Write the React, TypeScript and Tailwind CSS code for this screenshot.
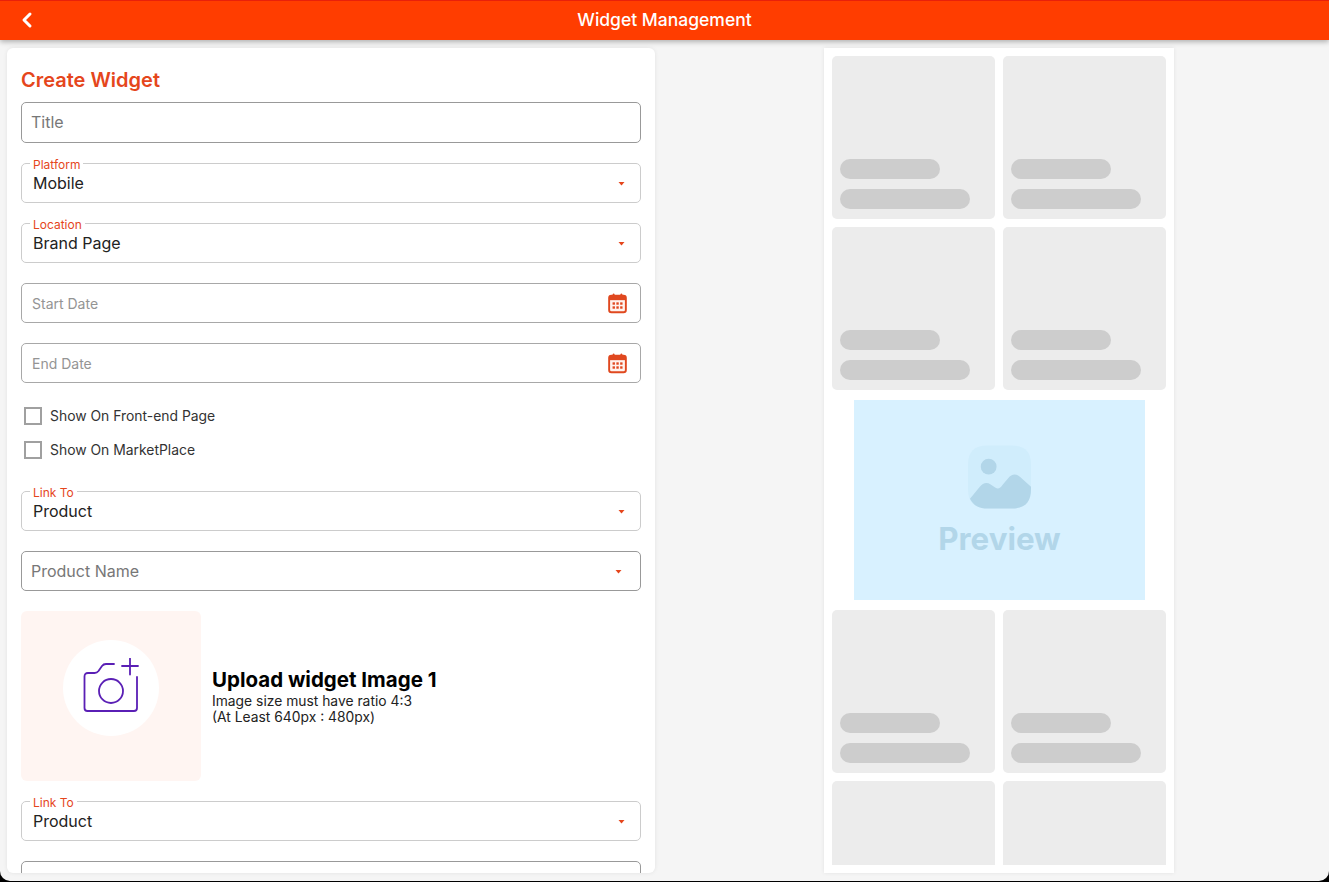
import { ChevronLeft } from "lucide-react";

function Caret({ className = "" }: { className?: string }) {
  return (
    <svg width="7" height="5" viewBox="0 0 7 5" className={className}>
      <path d="M0.5 1h6L3.5 4.4z" fill="#e5461c" />
    </svg>
  );
}

function CalendarIcon() {
  return (
    <svg width="19" height="22" viewBox="0 0 20 22" fill="none">
      <rect x="1.2" y="3.2" width="17.6" height="17.6" rx="2.4" stroke="#e0481f" strokeWidth="2" fill="#fff3ee" />
      <path d="M1.5 3.5h17v4.500h-17z" fill="#e0481f" />
      <rect x="5" y="1" width="1.8" height="4" rx="0.9" fill="#e0481f" />
      <rect x="13.2" y="1" width="1.8" height="4" rx="0.9" fill="#e0481f" />
      <g fill="#e0481f">
        <rect x="4.800" y="10.300" width="2.500" height="2.500" />
        <rect x="8.800" y="10.300" width="2.500" height="2.500" />
        <rect x="12.800" y="10.300" width="2.500" height="2.500" />
        <rect x="4.800" y="14.500" width="2.500" height="2.500" />
        <rect x="8.800" y="14.500" width="2.500" height="2.500" />
        <rect x="12.800" y="14.500" width="2.500" height="2.500" />
      </g>
    </svg>
  );
}

function SelectField({ label, value }: { label: string; value: string }) {
  return (
    <div className="relative h-10 rounded-[5px] border border-[#cccccc] flex items-center justify-between pl-[11px] pr-[15px]">
      <span className="absolute -top-[6px] left-2 bg-white px-[3px] text-xs leading-[14px] text-[#e5461c]">{label}</span>
      <span className="text-base leading-5 text-[#222]">{value}</span>
      <Caret />
    </div>
  );
}

function DateField({ label }: { label: string }) {
  return (
    <div className="h-10 rounded-[5px] border border-[#a8a8a8] flex items-center justify-between pl-2.5 pr-[13px]">
      <span className="text-sm text-[#949494] pt-0.5">{label}</span>
      <CalendarIcon />
    </div>
  );
}

function CheckRow({ label }: { label: string }) {
  return (
    <div className="flex items-center h-[18px] pl-[3px]">
      <span className="w-[18px] h-[18px] border-2 border-[#a0a0a0]" />
      <span className="ml-2 text-[13.9px] text-[#333]">{label}</span>
    </div>
  );
}

function SkeletonTile() {
  return (
    <div className="h-[163px] rounded-[5px] bg-[#ececec] flex flex-col justify-end gap-2.5 pl-2 pb-2.5">
      <div className="w-[100px] h-5 rounded-full bg-[#cdcdcd]" />
      <div className="w-[130px] h-5 rounded-full bg-[#cdcdcd]" />
    </div>
  );
}

export default function App() {
  return (
    <div className="w-[1329px] h-[882px] bg-black overflow-hidden font-['Inter',sans-serif]">
      <div className="h-[881px] bg-[#f5f5f5] rounded-b-[10px] flex flex-col overflow-hidden">
        <header className="relative h-10 shrink-0 bg-[#ff3d00] border-t border-[#e8200a] shadow-[0_2px_5px_rgba(0,0,0,0.28)] flex items-center justify-center">
          <ChevronLeft className="absolute left-[15px] top-[7px] text-white" size={24} strokeWidth={3} />
          <span className="text-white text-[17.5px] leading-6 font-medium -mt-0.5">Widget Management</span>
        </header>

        <main className="flex pt-2 pl-[7px]">
          <section className="w-[648px] h-[825px] bg-white rounded-[6px] shadow-[0_0_4px_rgba(0,0,0,0.08)] overflow-hidden px-3.5 pt-5">
            <h1 className="text-xl leading-6 font-semibold text-[#e5461c]">Create Widget</h1>
            <div className="mt-[10px] flex flex-col">
              <div className="h-[41px] rounded-[5px] border border-[#999999] flex items-center pl-[9px] pb-0.5 text-base text-[#777]">Title</div>
              <div className="mt-5 flex flex-col gap-5">
                <SelectField label="Platform" value="Mobile" />
                <SelectField label="Location" value="Brand Page" />
                <DateField label="Start Date" />
                <DateField label="End Date" />
              </div>
              <div className="mt-6 flex flex-col gap-4">
                <CheckRow label="Show On Front-end Page" />
                <CheckRow label="Show On MarketPlace" />
              </div>
              <div className="mt-8 flex flex-col gap-5">
                <SelectField label="Link To" value="Product" />
                <div className="h-10 rounded-[5px] border border-[#999999] flex items-center justify-between pl-[9px] pr-[18px]">
                  <span className="text-base text-[#777]">Product Name</span>
                  <Caret />
                </div>
              </div>
              <div className="mt-5 flex">
                <div className="w-[180px] h-[170px] rounded-[6px] bg-[#fff5f2] flex justify-center pt-[29px]">
                  <div className="w-24 h-24 rounded-full bg-white flex items-center justify-center">
                    <svg width="56" height="60" viewBox="0 0 56 60" fill="none" stroke="#5a1fb5" strokeWidth="1.8" strokeLinecap="round" strokeLinejoin="round">
                      <path d="M31 6h-8c-2 0-3 .6-4 2l-3.500 5c-1 1.300-2 2-4 2H5c-2.300 0-3.500 1.200-3.500 3.500V50c0 2 1 3 3 3H51c2 0 3-1 3-3V19" />
                      <circle cx="28" cy="33" r="12" />
                      <path d="M39 8h16M47 .5v16" />
                    </svg>
                  </div>
                </div>
                <div className="ml-[11px] pt-[57px]">
                  <div className="text-[20.5px] leading-6 font-bold text-black">Upload widget Image 1</div>
                  <div className="text-[13.85px] leading-4 text-[#222] mt-px">Image size must have ratio 4:3</div>
                  <div className="text-[13.85px] leading-4 text-[#222]">(At Least 640px : 480px)</div>
                </div>
              </div>
              <div className="mt-5">
                <SelectField label="Link To" value="Product" />
              </div>
              <div className="mt-5 h-10 rounded-[5px] border border-[#999999]" />
            </div>
          </section>

          <section className="ml-[169px] w-[350px] h-[825px] bg-white shadow-[0_0_4px_rgba(0,0,0,0.08)] overflow-hidden p-2">
            <div className="h-[809px] overflow-hidden">
              <div className="grid grid-cols-2 gap-2">
                <SkeletonTile />
                <SkeletonTile />
                <SkeletonTile />
                <SkeletonTile />
              </div>
              <div className="mt-2.5 ml-[22px] w-[291px] h-[200px] bg-[#d8f1ff] flex flex-col items-center pt-[45px]">
                <svg width="63" height="64" viewBox="0 0 64 64">
                  <path d="M20 0h24c14 0 20 6 20 20v24c0 14-6 20-20 20H20C6 64 0 58 0 44V20C0 6 6 0 20 0z" fill="#d0edfc" />
                  <circle cx="21" cy="21.500" r="8" fill="#b2d6e9" />
                  <path d="M2 54L12 42C15 38 19 37 23 39.500L28 43C31 44.500 33 43 35 40L41 33C44 29 49 28 53 32L64 42V44C64 58 58 64 44 64H20C11 64 6 61 2 54z" fill="#b2d6e9" />
                </svg>
                <div className="mt-2 text-[31.3px] leading-[44px] font-bold text-[#b2d6e9]">Preview</div>
              </div>
              <div className="mt-2.5 grid grid-cols-2 gap-2">
                <SkeletonTile />
                <SkeletonTile />
                <div className="h-[163px] rounded-[5px] bg-[#ececec]" />
                <div className="h-[163px] rounded-[5px] bg-[#ececec]" />
              </div>
            </div>
          </section>
        </main>
      </div>
    </div>
  );
}
